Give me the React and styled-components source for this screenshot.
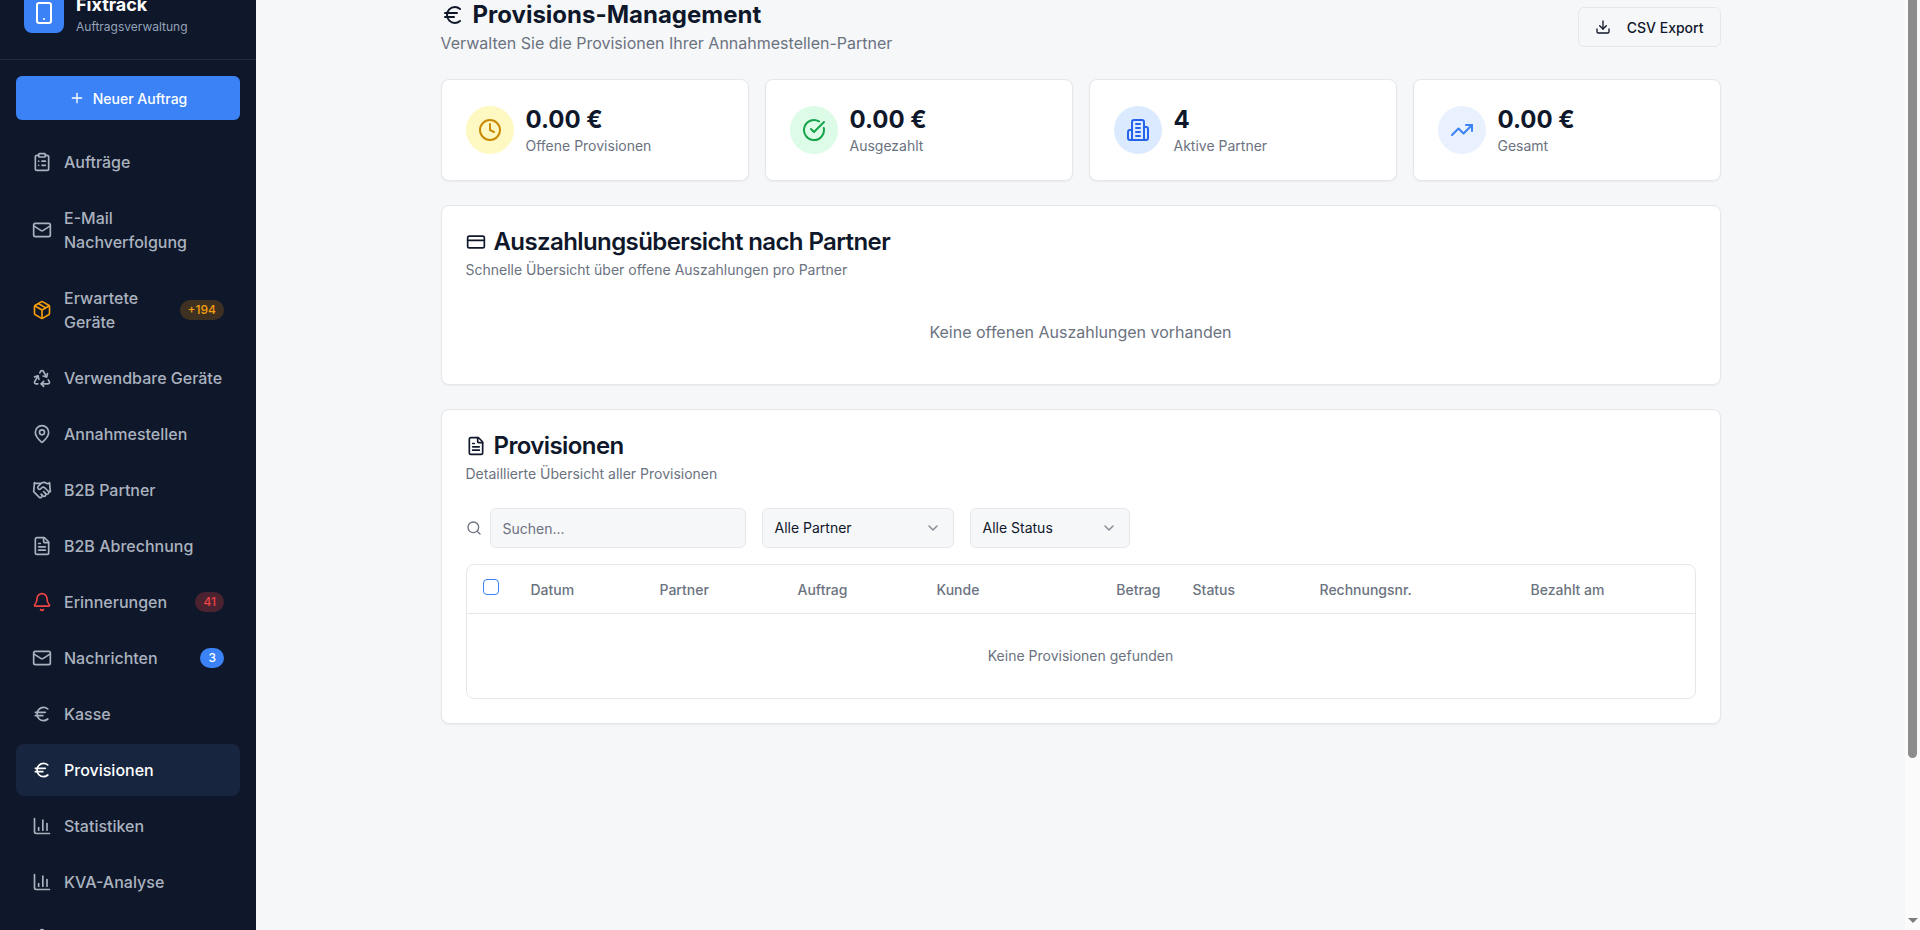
import React from "react";
import styled, { createGlobalStyle } from "styled-components";
import {
  Bell,
  ChartColumn,
  ChevronDown,
  CircleCheckBig,
  ClipboardList,
  Clock,
  CreditCard,
  Download,
  Euro,
  FileText,
  Handshake,
  Mail,
  MapPin,
  Package,
  Plus,
  Recycle,
  Search,
  Settings,
  Smartphone,
  TrendingUp,
} from "lucide-react";

const GlobalStyle = createGlobalStyle`
  html, body {
    margin: 0;
    height: 100%;
    overflow: hidden;
  }
  body {
    font-family: Inter, "Noto Sans", sans-serif;
    background: #f6f7f9;
    color: #0f172a;
  }
  * {
    box-sizing: border-box;
  }
`;

const Shell = styled.div`
  display: flex;
  height: 100vh;
  overflow: hidden;
`;

const Sidebar = styled.aside`
  flex: 0 0 256px;
  background: #0f172a;
  overflow: hidden;
`;

// the shot was taken slightly scrolled, so the brand row is cut off at the top
const Brand = styled.div`
  display: flex;
  align-items: center;
  gap: 12px;
  margin-top: -33px;
  padding: 24px;
  border-bottom: 1px solid #1e293b;
`;

const BrandLogo = styled.div`
  display: flex;
  align-items: center;
  justify-content: center;
  width: 40px;
  height: 40px;
  border-radius: 8px;
  background: #3b82f6;
  color: #fff;
`;

const BrandName = styled.div`
  font-size: 18px;
  line-height: 28px;
  font-weight: 700;
  color: #fff;
`;

const BrandSub = styled.div`
  font-size: 12px;
  line-height: 16px;
  color: #94a3b8;
`;

const SideBody = styled.div`
  padding: 16px;
`;

const NewOrder = styled.button`
  display: flex;
  align-items: center;
  justify-content: center;
  gap: 8px;
  width: 100%;
  height: 44px;
  border: 0;
  border-radius: 6px;
  background: #3b82f6;
  color: #fff;
  font: 500 14px Inter, sans-serif;
`;

const Nav = styled.nav`
  display: flex;
  flex-direction: column;
  gap: 4px;
  margin-top: 16px;
`;

const NavItem = styled.a`
  display: flex;
  align-items: center;
  gap: 12px;
  min-height: 52px;
  padding: 14px 16px;
  border-radius: 8px;
  font-size: 16px;
  line-height: 24px;
  font-weight: 500;
  color: ${(p) => (p.$active ? "#fff" : "#aab2bf")};
  background: ${(p) => (p.$active ? "#17253f" : "transparent")};

  svg {
    flex: 0 0 20px;
    color: ${(p) => p.$tint || "currentColor"};
  }
`;

const NavLabel = styled.span`
  flex: 1;
`;

const Badge = styled.span`
  flex: none;
  min-width: 23px;
  padding: 0 8px;
  border-radius: 10px;
  font-size: 12px;
  line-height: 20px;
  font-weight: 500;
  text-align: center;
  color: ${(p) => p.$color};
  background: ${(p) => p.$bg};
`;

const Main = styled.main`
  flex: 1;
  min-width: 0;
  overflow: hidden;
`;

const Content = styled.div`
  display: flex;
  flex-direction: column;
  width: 1280px;
  margin: -1px auto 0;
`;

const PageHead = styled.header`
  display: flex;
  align-items: flex-start;
  justify-content: space-between;
`;

const PageTitle = styled.h1`
  display: flex;
  align-items: center;
  gap: 8px;
  margin: 0;
  font-size: 24px;
  line-height: 32px;
  font-weight: 700;
  color: #0f172a;
`;

const PageSub = styled.p`
  margin: 0;
  font-size: 16px;
  line-height: 24px;
  color: #6b7280;
`;

const ExportButton = styled.button`
  display: flex;
  align-items: center;
  gap: 16px;
  height: 40px;
  margin-top: 8px;
  padding: 0 16px;
  border: 1px solid #e5e7eb;
  border-radius: 6px;
  background: #f6f7f9;
  color: #0f172a;
  font: 500 14px Inter, sans-serif;
`;

const StatGrid = styled.div`
  display: grid;
  grid-template-columns: repeat(4, 1fr);
  gap: 16px;
  margin-top: 24px;
`;

const Card = styled.section`
  border: 1px solid #e5e7eb;
  border-radius: 8px;
  background: #fff;
  box-shadow: 0 1px 2px rgba(0, 0, 0, 0.05);
`;

const StatCard = styled(Card)`
  display: flex;
  align-items: center;
  gap: 12px;
  height: 102px;
  padding: 0 24px;
`;

const StatIcon = styled.div`
  display: flex;
  align-items: center;
  justify-content: center;
  width: 48px;
  height: 48px;
  border-radius: 50%;
  color: ${(p) => p.$color};
  background: ${(p) => p.$bg};
`;

const StatValue = styled.div`
  font-size: 24px;
  line-height: 32px;
  font-weight: 700;
  color: #0f172a;
`;

const StatLabel = styled.div`
  font-size: 14px;
  line-height: 20px;
  color: #6b7280;
`;

const Panel = styled(Card)`
  margin-top: 24px;
  padding: 24px;
`;

const PanelTitle = styled.h2`
  display: flex;
  align-items: center;
  gap: 8px;
  margin: 0;
  font-size: 24px;
  line-height: 24px;
  font-weight: 600;
  letter-spacing: -0.6px;
  color: #0f172a;
`;

const PanelSub = styled.p`
  margin: 6px 0 0;
  font-size: 14px;
  line-height: 20px;
  color: #6b7280;
`;

const EmptyNote = styled.div`
  margin-top: 24px;
  padding: 16px 0;
  font-size: 16px;
  line-height: 24px;
  text-align: center;
  color: #6b7280;
`;

const Filters = styled.div`
  display: flex;
  align-items: center;
  gap: 16px;
  margin-top: 24px;
`;

const SearchWrap = styled.div`
  display: flex;
  align-items: center;
  gap: 8px;
  color: #6b7280;
`;

const SearchInput = styled.input`
  width: 256px;
  height: 40px;
  padding: 0 12px;
  border: 1px solid #e5e7eb;
  border-radius: 6px;
  background: #f6f7f9;
  font: 14px Inter, sans-serif;
  color: #0f172a;

  &::placeholder {
    color: #6b7280;
  }
`;

const SelectBox = styled.div`
  display: flex;
  align-items: center;
  justify-content: space-between;
  width: ${(p) => p.$width}px;
  height: 40px;
  padding: 0 12px 1px;
  border: 1px solid #e5e7eb;
  border-radius: 6px;
  background: #f6f7f9;
  font-size: 14px;
  color: #0f172a;

  svg {
    opacity: 0.5;
  }
`;

const TableBox = styled.div`
  margin-top: 16px;
  border: 1px solid #e5e7eb;
  border-radius: 8px;
`;

const TableHead = styled.div`
  display: grid;
  grid-template-columns: 48px 129px 138px 139px 128px 128px 127px 211px 1fr;
  align-items: center;
  height: 49px;
  padding: 0 16px;
  border-bottom: 1px solid #e5e7eb;
  font-size: 14px;
  font-weight: 500;
  color: #6b7280;
`;

const HeadCell = styled.div`
  padding-right: ${(p) => (p.$right ? "32px" : "0")};
  text-align: ${(p) => (p.$right ? "right" : "left")};
`;

const CheckBox = styled.span`
  display: block;
  width: 16px;
  height: 16px;
  margin-bottom: 4px;
  border: 1px solid #3b82f6;
  border-radius: 4px;
`;

const TableEmpty = styled.div`
  display: flex;
  align-items: center;
  justify-content: center;
  height: 84px;
  padding-bottom: 2px;
  font-size: 14px;
  color: #6b7280;
`;

const ScrollRail = styled.div`
  display: flex;
  flex: 0 0 15px;
  flex-direction: column;
  align-items: center;
  justify-content: space-between;
  height: 100vh;
  padding-bottom: 7px;
  background: #fbfbfb;
`;

const ScrollThumb = styled.div`
  width: 9px;
  height: 758px;
  border-radius: 0 0 5px 5px;
  background: #8d8d8d;
`;

const ScrollArrow = styled.div`
  width: 0;
  height: 0;
  border-left: 5px solid transparent;
  border-right: 5px solid transparent;
  border-top: 5px solid #7d7d7d;
`;

// older lucide building-2 with the four window lines
const BuildingIcon = () => (
  <svg
    width="24"
    height="24"
    viewBox="0 0 24 24"
    fill="none"
    stroke="currentColor"
    strokeWidth="2"
    strokeLinecap="round"
    strokeLinejoin="round"
  >
    <path d="M6 22V4a2 2 0 0 1 2-2h8a2 2 0 0 1 2 2v18Z" />
    <path d="M6 12H4a2 2 0 0 0-2 2v6a2 2 0 0 0 2 2h2" />
    <path d="M18 9h2a2 2 0 0 1 2 2v9a2 2 0 0 1-2 2h-2" />
    <path d="M10 6h4" />
    <path d="M10 10h4" />
    <path d="M10 14h4" />
    <path d="M10 18h4" />
  </svg>
);

const navItems = [
  { label: "Aufträge", icon: ClipboardList },
  { label: "E-Mail Nachverfolgung", icon: Mail },
  {
    label: "Erwartete Geräte",
    icon: Package,
    tint: "#f59e0b",
    badge: { text: "+194", color: "#f59e0b", bg: "#3e3122" },
  },
  { label: "Verwendbare Geräte", icon: Recycle },
  { label: "Annahmestellen", icon: MapPin },
  { label: "B2B Partner", icon: Handshake },
  { label: "B2B Abrechnung", icon: FileText },
  {
    label: "Erinnerungen",
    icon: Bell,
    tint: "#ef4444",
    badge: { text: "41", color: "#ef4444", bg: "#4a2230" },
  },
  {
    label: "Nachrichten",
    icon: Mail,
    badge: { text: "3", color: "#fff", bg: "#3b82f6" },
  },
  { label: "Kasse", icon: Euro },
  { label: "Provisionen", icon: Euro, active: true },
  { label: "Statistiken", icon: ChartColumn },
  { label: "KVA-Analyse", icon: ChartColumn },
  // only the top of this icon shows at the bottom edge, its label is out of view
  { label: "", icon: Settings },
];

const stats = [
  { value: "0.00 €", label: "Offene Provisionen", icon: <Clock size={24} />, color: "#ca8a04", bg: "#fef9c3" },
  { value: "0.00 €", label: "Ausgezahlt", icon: <CircleCheckBig size={24} />, color: "#16a34a", bg: "#dcfce7" },
  { value: "4", label: "Aktive Partner", icon: <BuildingIcon />, color: "#2563eb", bg: "#dbeafe" },
  { value: "0.00 €", label: "Gesamt", icon: <TrendingUp size={24} />, color: "#3b82f6", bg: "#eaf1fe" },
];

const columns = ["Datum", "Partner", "Auftrag", "Kunde", "Betrag", "Status", "Rechnungsnr.", "Bezahlt am"];

const App = () => {
  return (
    <Shell>
      <GlobalStyle />
      <Sidebar>
        <Brand>
          <BrandLogo>
            <Smartphone size={24} />
          </BrandLogo>
          <div>
            <BrandName>Fixtrack</BrandName>
            <BrandSub>Auftragsverwaltung</BrandSub>
          </div>
        </Brand>
        <SideBody>
          <NewOrder type="button">
            <Plus size={16} />
            Neuer Auftrag
          </NewOrder>
          <Nav>
            {navItems.map((item) => (
              <NavItem key={item.label} $active={item.active} $tint={item.tint}>
                <item.icon size={20} />
                <NavLabel>{item.label}</NavLabel>
                {item.badge && (
                  <Badge $color={item.badge.color} $bg={item.badge.bg}>
                    {item.badge.text}
                  </Badge>
                )}
              </NavItem>
            ))}
          </Nav>
        </SideBody>
      </Sidebar>

      <Main>
        <Content>
          <PageHead>
            <div>
              <PageTitle>
                <Euro size={24} />
                Provisions-Management
              </PageTitle>
              <PageSub>Verwalten Sie die Provisionen Ihrer Annahmestellen-Partner</PageSub>
            </div>
            <ExportButton type="button">
              <Download size={16} />
              CSV Export
            </ExportButton>
          </PageHead>

          <StatGrid>
            {stats.map((stat) => (
              <StatCard key={stat.label}>
                <StatIcon $color={stat.color} $bg={stat.bg}>
                  {stat.icon}
                </StatIcon>
                <div>
                  <StatValue>{stat.value}</StatValue>
                  <StatLabel>{stat.label}</StatLabel>
                </div>
              </StatCard>
            ))}
          </StatGrid>

          <Panel>
            <PanelTitle>
              <CreditCard size={20} />
              Auszahlungsübersicht nach Partner
            </PanelTitle>
            <PanelSub>Schnelle Übersicht über offene Auszahlungen pro Partner</PanelSub>
            <EmptyNote>Keine offenen Auszahlungen vorhanden</EmptyNote>
          </Panel>

          <Panel>
            <PanelTitle>
              <FileText size={20} />
              Provisionen
            </PanelTitle>
            <PanelSub>Detaillierte Übersicht aller Provisionen</PanelSub>
            <Filters>
              <SearchWrap>
                <Search size={16} />
                <SearchInput placeholder="Suchen..." />
              </SearchWrap>
              <SelectBox $width={192}>
                Alle Partner
                <ChevronDown size={16} />
              </SelectBox>
              <SelectBox $width={160}>
                Alle Status
                <ChevronDown size={16} />
              </SelectBox>
            </Filters>
            <TableBox>
              <TableHead>
                <CheckBox />
                {columns.map((col) => (
                  <HeadCell key={col} $right={col === "Betrag"}>
                    {col}
                  </HeadCell>
                ))}
              </TableHead>
              <TableEmpty>Keine Provisionen gefunden</TableEmpty>
            </TableBox>
          </Panel>
        </Content>
      </Main>

      <ScrollRail>
        <ScrollThumb />
        <ScrollArrow />
      </ScrollRail>
    </Shell>
  );
};

export default App;
